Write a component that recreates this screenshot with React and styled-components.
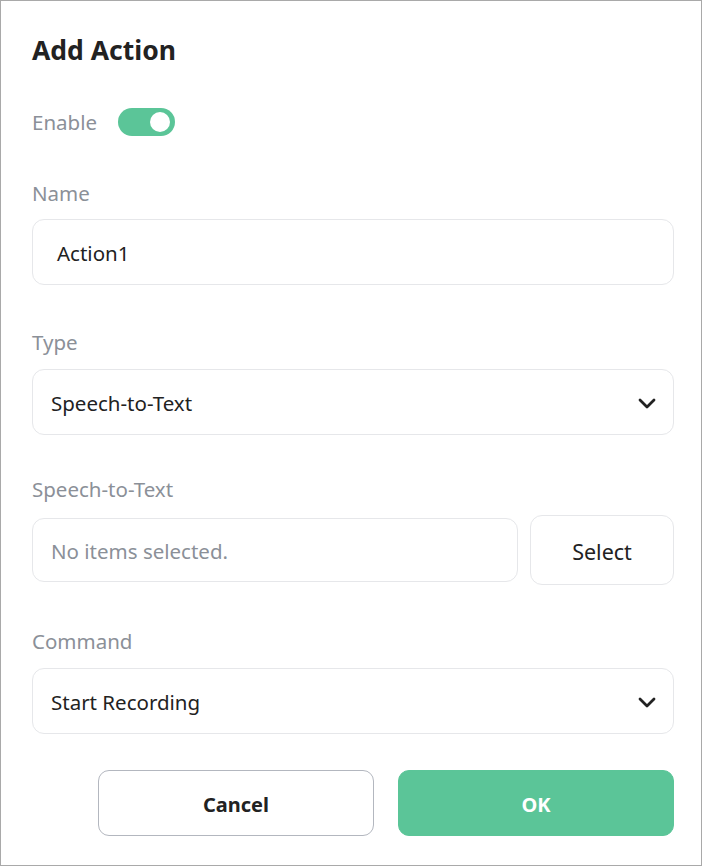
import React from "react";
import styled, { createGlobalStyle } from "styled-components";

const Global = createGlobalStyle`
  html, body {
    margin: 0;
    padding: 0;
    background: #fff;
  }
  * {
    box-sizing: border-box;
  }
`;

const Dialog = styled.div`
  width: 702px;
  height: 866px;
  border: 1px solid #a9a9a9;
  padding: 0 27px 0 31px;
  font-family: "Noto Sans", "Noto Sans CJK KR", sans-serif;
  color: #222;
  display: flex;
  flex-direction: column;
`;

const Title = styled.h1`
  margin: 34px 0 0;
  font-size: 26.5px;
  line-height: 30px;
  font-weight: 700;
  color: #222;
`;

const EnableRow = styled.div`
  margin-top: 43px;
  height: 28px;
  display: flex;
  align-items: center;
  gap: 21px;
`;

const Label = styled.div`
  margin-top: ${(p) => p.$top ?? 43}px;
  font-size: 20.5px;
  line-height: 28px;
  color: #8b9098;
`;

const InlineLabel = styled(Label)`
  margin-top: 0;
`;

const Toggle = styled.div`
  width: 57px;
  height: 28px;
  border-radius: 14px;
  background: #5bc598;
  position: relative;
`;

const Knob = styled.div`
  position: absolute;
  top: 4px;
  right: 5px;
  width: 20px;
  height: 20px;
  border-radius: 50%;
  background: #fff;
`;

const Field = styled.div`
  margin-top: ${(p) => p.$top ?? 12}px;
  height: ${(p) => p.$h ?? 66}px;
  flex: ${(p) => (p.$grow ? 1 : "none")};
  border: 1px solid #e6e7ea;
  border-radius: 12px;
  display: flex;
  align-items: center;
  justify-content: space-between;
  padding: 2px 17px 0 ${(p) => p.$pl ?? 18}px;
  font-size: 20.5px;
  color: ${(p) => (p.$muted ? "#8b9098" : "#222")};
`;

const PickerRow = styled.div`
  margin-top: 12px;
  height: 70px;
  display: flex;
  align-items: center;
  gap: 12px;
`;

const SelectButton = styled.button`
  width: 144px;
  height: 70px;
  border: 1px solid #e6e7ea;
  border-radius: 12px;
  background: #fff;
  font-family: inherit;
  font-size: 21.5px;
  color: #222;
  padding: 2px 0 0;
`;

const Footer = styled.div`
  margin-top: 36px;
  display: flex;
  justify-content: flex-end;
  gap: 24px;
`;

const Button = styled.button`
  width: 276px;
  height: 66px;
  border-radius: 11px;
  border: 1px solid ${(p) => (p.$primary ? "#5bc598" : "#b3b7bf")};
  background: ${(p) => (p.$primary ? "#5bc598" : "#fff")};
  color: ${(p) => (p.$primary ? "#fff" : "#222")};
  font-family: inherit;
  font-size: 20px;
  font-weight: 700;
  padding: 2px 0 0;
`;

const Chevron = () => (
  <svg width="18" height="11" viewBox="0 0 18 11" fill="none">
    <path d="M2 2l7 7 7-7" stroke="#222" strokeWidth="2.8" strokeLinecap="round" strokeLinejoin="round" />
  </svg>
);

export default function App() {
  return (
    <>
      <Global />
      <Dialog>
        <Title>Add Action</Title>
        <EnableRow>
          <InlineLabel>Enable</InlineLabel>
          <Toggle>
            <Knob />
          </Toggle>
        </EnableRow>

        <Label>Name</Label>
        <Field $pl={24}>Action1</Field>

        <Label $top={43}>Type</Label>
        <Field $top={13}>
          Speech-to-Text
          <Chevron />
        </Field>

        <Label $top={40}>Speech-to-Text</Label>
        <PickerRow>
          <Field $top={0} $h={64} $grow $muted>
            No items selected.
          </Field>
          <SelectButton>Select</SelectButton>
        </PickerRow>

        <Label $top={42}>Command</Label>
        <Field $top={13}>
          Start Recording
          <Chevron />
        </Field>

        <Footer>
          <Button>Cancel</Button>
          <Button $primary>OK</Button>
        </Footer>
      </Dialog>
    </>
  );
}
